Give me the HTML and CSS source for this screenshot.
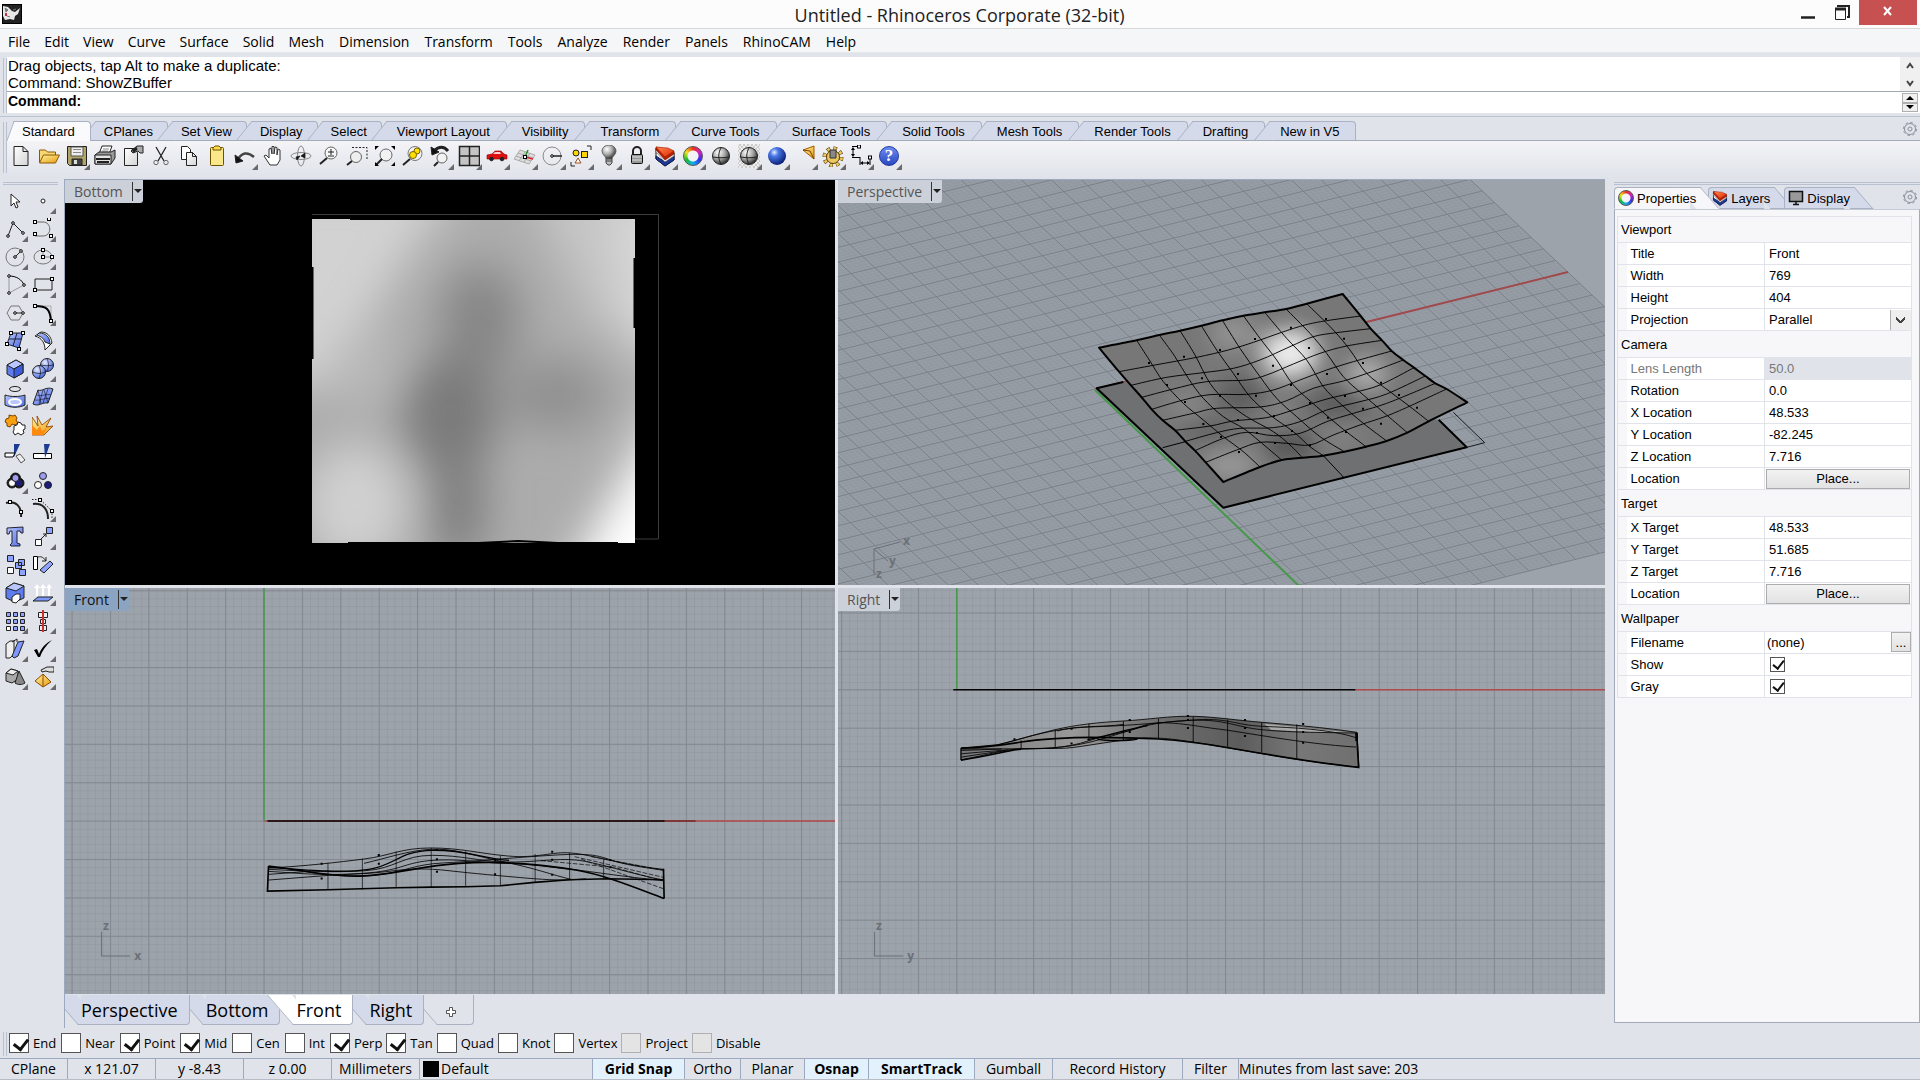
FILE: index.html
```
<!DOCTYPE html>
<html lang="en">
  <head>
    <meta charset="utf-8">
    <title>Untitled - Rhinoceros Corporate (32-bit)</title>
    <link rel="stylesheet" href="styles.css">
  </head>
  <body>
    <!-- Shared gradients and point markers -->
    <svg class="defs" aria-hidden="true">
      <defs>
        <linearGradient id="paper" x1="0" y1="0" x2="1" y2="1"><stop offset="0" stop-color="#fff"/><stop offset="1" stop-color="#d4d4d4"/></linearGradient>
        <linearGradient id="gold" x1="0" y1="0" x2="1" y2="1"><stop offset="0" stop-color="#fff3a0"/><stop offset="1" stop-color="#e89a10"/></linearGradient>
        <linearGradient id="blue" x1="0" y1="0" x2="1" y2="1"><stop offset="0" stop-color="#b9c6ff"/><stop offset="1" stop-color="#4a6ae0"/></linearGradient>
        <linearGradient id="red" x1="0" y1="0" x2="1" y2="1"><stop offset="0" stop-color="#ff8a50"/><stop offset="1" stop-color="#e02808"/></linearGradient>
        <radialGradient id="silverBall" cx=".35" cy=".3" r=".75"><stop offset="0" stop-color="#fff"/><stop offset=".5" stop-color="#aaa"/><stop offset="1" stop-color="#222"/></radialGradient>
        <radialGradient id="blueBall" cx=".35" cy=".3" r=".75"><stop offset="0" stop-color="#e8f0ff"/><stop offset=".3" stop-color="#4a78e8"/><stop offset="1" stop-color="#05186e"/></radialGradient>
        <radialGradient id="softBall" cx=".35" cy=".3" r=".75"><stop offset="0" stop-color="#e4eaff"/><stop offset="1" stop-color="#4464dc"/></radialGradient>
        <marker id="sq" markerUnits="userSpaceOnUse" markerWidth="5" markerHeight="5" refX="2.5" refY="2.5"><rect x="1" y="1" width="3" height="3" fill="#fff" stroke="#000"/></marker>
        <marker id="dot" markerUnits="userSpaceOnUse" markerWidth="5" markerHeight="5" refX="2.5" refY="2.5"><circle cx="2.5" cy="2.5" r="1.3" fill="#fff" stroke="#000"/></marker>
        <symbol id="layers" viewBox="0 0 22 22">
          <path d="M2 3v11l9 7 9-6V8z" fill="#fff" stroke="#111"/>
          <path d="M2 11v3l9 7 9-6v-4l-9 6z" fill="#1c3a9c" stroke="#101c50"/>
          <path d="M2 3v4l9 10 9-6V7l-9 5z" fill="#f4f4f4" stroke="#555" stroke-width=".6"/>
          <path d="M2 2v3l9 10 9-6V6z" fill="#b82000" stroke="#701000" stroke-width=".6"/>
          <path d="M2 2l9 10 9-6-6-3z" fill="url(#red)" stroke="#a02000" stroke-width=".6"/>
        </symbol>
        <symbol id="gear" viewBox="0 0 16 16">
          <circle cx="8" cy="8" r="5.5" fill="none" stroke="#8b909a"/>
          <circle cx="8" cy="8" r="6.6" fill="none" stroke="#8b909a" stroke-dasharray="2.6 2.6"/>
          <circle cx="8" cy="8" r="2" fill="none" stroke="#8b909a"/>
        </symbol>
      </defs>
    </svg>

    <header class="titlebar">
      <svg class="app-icon" viewBox="0 0 20 20">
        <rect x=".5" y=".5" width="19" height="19" fill="#222" stroke="#000"/>
        <path d="M1 2l5 1 4 4 3 1 5-4-2 6-3 2-1 4-4-1-5 1-2-4z" fill="#e8e8e8"/>
        <path d="M3 4l3 2-2 2zM11 6l3-1M5 12l3 1" fill="#777" stroke="#777"/>
        <path d="M3 9h2v3H3z" fill="#c03038"/>
      </svg>
      <h1 class="window-title">Untitled - Rhinoceros Corporate (32-bit)</h1>
      <div class="window-buttons">
        <button class="win-btn" aria-label="Minimize"><svg viewBox="0 0 16 20"><path d="M1 16.500h14" stroke="#222" stroke-width="2.500"/></svg></button>
        <button class="win-btn" aria-label="Restore"><svg viewBox="0 0 16 20"><path d="M4 4V5h11v11h-2" fill="none" stroke="#222" stroke-width="2"/><path d="M1.500 8v10.500h10V8" fill="none" stroke="#222"/><path d="M1 8h11" stroke="#222" stroke-width="3"/></svg></button>
        <button class="win-btn close" aria-label="Close"><svg viewBox="0 0 12 12"><path d="M2 2l7 8M9 2l-7 8" stroke="#fff" stroke-width="2"/></svg></button>
      </div>
    </header>

    <nav class="menubar">
      <button>File</button><button>Edit</button><button>View</button><button>Curve</button><button>Surface</button><button>Solid</button><button>Mesh</button><button>Dimension</button><button>Transform</button><button>Tools</button><button>Analyze</button><button>Render</button><button>Panels</button><button>RhinoCAM</button><button>Help</button>
    </nav>

    <section class="command">
      <div class="grip"></div>
      <div class="command-box">
        <div class="history">
          <div class="history-text">
            <p>Drag objects, tap Alt to make a duplicate:</p>
            <p>Command: ShowZBuffer</p>
          </div>
          <div class="scroller">
            <button aria-label="Scroll up"><svg viewBox="0 0 8 8"><path d="M1 6l3-4 3 4" fill="none" stroke="#444" stroke-width="2"/></svg></button>
            <button aria-label="Scroll down"><svg viewBox="0 0 8 8"><path d="M1 2l3 4 3-4" fill="none" stroke="#444" stroke-width="2"/></svg></button>
          </div>
        </div>
        <div class="prompt">
          <label for="cmd">Command:</label>
          <input type="text" id="cmd">
          <div class="spinner">
            <button aria-label="Previous command"><svg viewBox="0 0 8 6"><path d="M0 5l4-4 4 4z"/></svg></button>
            <button aria-label="Next command"><svg viewBox="0 0 8 6"><path d="M0 1l4 4 4-4z"/></svg></button>
          </div>
        </div>
      </div>
    </section>

    <section class="toolbars">
      <div class="grip"></div>
      <div class="toolbars-body">
        <div class="tabs">
          <button class="tab active">Standard</button><button class="tab">CPlanes</button><button class="tab">Set View</button><button class="tab">Display</button><button class="tab">Select</button><button class="tab">Viewport Layout</button><button class="tab">Visibility</button><button class="tab">Transform</button><button class="tab">Curve Tools</button><button class="tab">Surface Tools</button><button class="tab">Solid Tools</button><button class="tab">Mesh Tools</button><button class="tab">Render Tools</button><button class="tab">Drafting</button><button class="tab">New in V5</button>
          <button class="options" aria-label="Toolbar options"><svg><use href="#gear"/></svg></button>
        </div>
        <div class="toolbar">
          <button class="tool" title="New"><svg viewBox="0 0 22 22"><path d="M4 1.500h9l5 5v14H4z" fill="url(#paper)"/><path d="M13 1.500v5h5"/></svg></button>
          <button class="tool" title="Open"><svg viewBox="0 0 22 22"><path d="M1.500 17V5h6l2 2h8v4" fill="#f7d774" stroke="#8a5a00"/><path d="M1.500 18l4-8h16l-4 8z" fill="url(#gold)" stroke="#8a5a00"/></svg></button>
          <button class="tool more" title="Save"><svg viewBox="0 0 22 22"><path d="M1.500 1.500h19v19h-17l-2-2z" fill="#b0a468"/><path d="M5 2h12v9H5z" fill="#eee" stroke="#555"/><path d="M7 4.500h8M7 7.500h8" stroke="#888"/><path d="M6 14h10v6H6z" fill="#444"/><path d="M8 15h3v4H8z" fill="#ddd" stroke="none"/></svg></button>
          <button class="tool" title="Print"><svg viewBox="0 0 22 22"><path d="M5 9l3-8h10l-3 8z" fill="#fff"/><path d="M9 4h6M8 6h6" stroke="#888"/><path d="M1 10l4-3h12l4-2v8l-4 6H1z" fill="#999"/><path d="M1 10h16v9H1z" fill="#e2e2e2"/><path d="M2 14h14M3 17h12" stroke="#222" stroke-width="2"/></svg></button>
          <button class="tool" title="Document properties"><svg viewBox="0 0 22 22"><path d="M2.500 3.500h9l4 4v13h-13z" fill="url(#paper)"/><path d="M9 6l6-5h6v7h-3l-2-2-5 2z" fill="#aaa"/><path d="M10 5l5-2M11 7l4-3" stroke-width="2"/></svg></button>
          <button class="tool" title="Cut"><svg viewBox="0 0 22 22"><path d="M6 2l8 14M16 2L8 16" stroke-width="1.300"/><circle cx="6" cy="17.500" r="2.200" stroke="#666"/><circle cx="16" cy="17.500" r="2.200" stroke="#666"/></svg></button>
          <button class="tool" title="Copy"><svg viewBox="0 0 22 22"><path d="M3.500 1.500h6l3 3v10h-9z" fill="#fff"/><path d="M8.500 7.500h6l4 4v9h-10z" fill="url(#paper)"/><path d="M14.500 7.500v4h4"/></svg></button>
          <button class="tool" title="Paste"><svg viewBox="0 0 22 22"><rect x="4.500" y="2.500" width="13" height="18" rx="1" fill="#fbe88a" stroke="#6a5400"/><path d="M7 5V3l2-2h4l2 2v2z" fill="#ffd94a" stroke="#6a5400"/></svg></button>
          <button class="tool more" title="Undo"><svg viewBox="0 0 22 22"><path d="M4 14C8 8 13 6 20 12" stroke="#444" stroke-width="2.500"/><path d="M1 10l1 8 7-2z" fill="#111"/></svg></button>
          <button class="tool" title="Pan"><svg viewBox="0 0 22 22"><path d="M8 20l-6-9 2-1 3 3V4l2-1 1 6V1.500h2V9l1-7 2 .5V10l1-6 2 1v10l-3 5z" fill="#fff" stroke="#333"/></svg></button>
          <button class="tool" title="Rotate view"><svg viewBox="0 0 22 22"><ellipse cx="11" cy="11" rx="10" ry="3.500" stroke="#888"/><ellipse cx="11" cy="11" rx="3.500" ry="10" stroke="#888"/><path d="M6 12l4-1-3 4zM11 11l4-3v5z" fill="#111" stroke-width=".8"/></svg></button>
          <button class="tool" title="Zoom dynamic"><svg viewBox="0 0 22 22"><circle cx="13" cy="8" r="6" fill="#f6f6f6" stroke="#666"/><path d="M9 13l-7 6" stroke-width="2"/><path d="M10 7h6M13 4v6M10 11h6"/></svg></button>
          <button class="tool" title="Zoom window"><svg viewBox="0 0 22 22"><path d="M6 2.500h15v12" stroke-dasharray="2 1.500"/><circle cx="10" cy="12" r="5.500" fill="#eee" stroke="#666"/><path d="M6 16l-5 4" stroke-width="2"/></svg></button>
          <button class="tool" title="Zoom extents"><svg viewBox="0 0 22 22"><circle cx="12" cy="10" r="6" fill="#f2f2f2" stroke="#666"/><path d="M8 14l-6 6" stroke-width="2"/><path d="M1 5V1h4zM17 1h4v4zM21 17v4h-4zM1 17v4h4z" fill="#000" stroke="none"/></svg></button>
          <button class="tool" title="Zoom selected"><svg viewBox="0 0 22 22"><circle cx="13" cy="8.500" r="7" fill="#f2f2f2" stroke="#777"/><circle cx="15" cy="6" r="3" fill="#ffe000" stroke="#776000"/><circle cx="11" cy="10" r="3.500" fill="#ffe000" stroke="#776000"/><path d="M8 14l-7 6" stroke-width="2"/></svg></button>
          <button class="tool more" title="Undo view"><svg viewBox="0 0 22 22"><path d="M4 6c5-5 10-5 14 0" stroke="#222" stroke-width="3"/><path d="M1 2l1 8 7-3z" fill="#111"/><circle cx="12" cy="13" r="5" fill="#f2f2f2" stroke="#666"/><path d="M8 17l-4 4" stroke-width="2"/></svg></button>
          <button class="tool more" title="Viewports"><svg viewBox="0 0 22 22"><path d="M1.500 1.500h20v19h-20z" fill="#c4c4c4" stroke-width="1.500"/><path d="M11.500 2v18M2 11h19" stroke-width="1.500"/></svg></button>
          <button class="tool more" title="Set view"><svg viewBox="0 0 22 22"><path d="M1 10l5-1 3-3h6l3 3 3 1v4H1z" fill="#e01010" stroke="#900000" stroke-width=".6"/><path d="M9 7l-2 2h8l-1-2z" fill="#ffd0d0" stroke="none"/><circle cx="5.500" cy="14" r="1.800" fill="#222"/><circle cx="16" cy="14" r="1.800" fill="#222"/></svg></button>
          <button class="tool more" title="CPlane"><svg viewBox="0 0 22 22"><path d="M6 5l15 5-6 9-15-5zM4 8l15 5M2 11l15 5M11 7l-6 9M16 8l-6 9" stroke="#aaa" fill="#ddd"/><path d="M11 12l8 2" stroke="#e02020" stroke-width="1.500"/><path d="M11 12l3-7" stroke="#209020" stroke-width="1.500"/><rect x="9.500" y="10.500" width="3" height="3" fill="#fff" stroke="#000"/></svg></button>
          <button class="tool more" title="Object snap"><svg viewBox="0 0 22 22"><circle cx="10" cy="11" r="9" stroke="#888"/><path d="M10 11h10" stroke-width="1.500" marker-start="url(#dot)"/></svg></button>
          <button class="tool more" title="Select objects"><svg viewBox="0 0 22 22"><circle cx="6" cy="8" r="3" fill="#ffd400"/><rect x="11.500" y="6.500" width="6" height="6" fill="#ffd400"/><path d="M5 18l3-5 3 5z" fill="#fff" stroke="#a05020"/><path d="M17 1h4v4M1 17v4h4"/></svg></button>
          <button class="tool more" title="Hide"><svg viewBox="0 0 22 22"><path d="M8 14c0-3-4-4-4-8a7 6 0 0 1 14 0c0 4-4 5-4 8z" fill="url(#silverBall)" stroke="#666"/><path d="M8 14h6v4l-2 2h-2l-2-2zM8 16h6" fill="#bbb" stroke="#444"/></svg></button>
          <button class="tool more" title="Lock"><svg viewBox="0 0 22 22"><path d="M7 10V6a4 4 0 0 1 8 0v4" stroke-width="2"/><rect x="5.500" y="9.500" width="11" height="9" rx="1" fill="#999" stroke="#111"/><path d="M6 12h10M6 15h10" stroke="#ddd"/></svg></button>
          <button class="tool more" title="Layers"><svg><use href="#layers"/></svg></button>
          <button class="tool more" title="Properties"><span class="wheel"></span></button>
          <button class="tool" title="Shade"><svg viewBox="0 0 22 22"><circle cx="11" cy="11" r="8.500" fill="url(#silverBall)"/><path d="M3 12c5 1 11 1 16 0M11 3c-3 5-3 11 0 16" stroke="#222"/></svg></button>
          <button class="tool more checker" title="Render preview"><svg viewBox="0 0 22 22"><circle cx="11" cy="11" r="8.500" fill="url(#silverBall)"/><path d="M3 12c5 1 11 1 16 0M11 3c-3 5-3 11 0 16" stroke="#222"/></svg></button>
          <button class="tool more" title="Render"><svg viewBox="0 0 22 22"><circle cx="11" cy="11" r="9" fill="url(#blueBall)" stroke="none"/></svg></button>
          <button class="tool more" title="Spotlight"><svg viewBox="0 0 22 22"><path d="M9 5l11-4v13z" fill="url(#gold)" stroke="#a05a00"/><path d="M9 5l7 1 4 8" stroke="#7a4000"/></svg></button>
          <button class="tool more" title="Options"><svg viewBox="0 0 22 22"><circle cx="11" cy="12" r="8.500" stroke="#5a3c00" stroke-width="4" stroke-dasharray="3.500 3.200"/><circle cx="11" cy="12" r="8.500" stroke="#ecc860" stroke-width="3" stroke-dasharray="2.500 4.200" stroke-dashoffset="-.5"/><circle cx="11" cy="12" r="6.500" fill="#ecc860" stroke="#5a3c00"/><path d="M8 5h6v8H8z" fill="#888" stroke="#333"/></svg></button>
          <button class="tool more" title="Dimension"><svg viewBox="0 0 22 22"><path d="M2 1.500h8M3 4v6M2 12.500h8M10 12v8M20 12v8M12 18h7" stroke="#000"/><path d="M3 2l-2 3h4zM3 12l-2-3h4zM10 18l3-2v4zM20 18l-3-2v4z" fill="#000" stroke="none"/><path d="M9 1.500M9 12.500h0M20 12.500h0" marker-start="url(#sq)" marker-end="url(#sq)"/></svg></button>
          <button class="tool more" title="Help"><span class="help">?</span></button>
        </div>
      </div>
    </section>

    <main class="workspace">
      <aside class="sidebar">
        <div class="grip-h"></div>
        <div class="tools">
          <button class="tool" title="Select"><svg viewBox="0 0 22 22"><path d="M7 4v12l3-3 2 5 2-1-2-5h4z" fill="#fff"/></svg></button>
          <button class="tool more" title="Point"><svg viewBox="0 0 22 22"><circle cx="11" cy="11" r="2" fill="#fff"/></svg></button>
          <button class="tool more" title="Polyline"><svg viewBox="0 0 22 22"><path class="dots" d="M4 18L9 5l10 10"/></svg></button>
          <button class="tool more" title="Curve"><svg viewBox="0 0 22 22"><path d="M3 4h8c9 0 9 14 0 14H3" stroke="#666"/><path class="nodes" d="M3 4L17 1 19 18 3 16"/></svg></button>
          <button class="tool more" title="Circle"><svg viewBox="0 0 22 22"><circle cx="11" cy="11" r="9" stroke="#777"/><path class="dots" d="M11 11l6-6"/></svg></button>
          <button class="tool more" title="Ellipse"><svg viewBox="0 0 22 22"><ellipse cx="11" cy="11" rx="9" ry="7" stroke="#777"/><path d="M11 4v7h9" stroke="#888"/><path class="nodes" d="M11 4L11 11 20 11"/></svg></button>
          <button class="tool more" title="Arc"><svg viewBox="0 0 22 22"><path d="M5 2v17l15-8" stroke="#999"/><path d="M5 2c8 0 13 4 15 9" stroke="#000"/><path class="nodes round" d="M5 2L20 11 5 19"/></svg></button>
          <button class="tool more" title="Rectangle"><svg viewBox="0 0 22 22"><path d="M3 5h17v11H3z"/><path class="nodes" d="M20 5L3 16"/></svg></button>
          <button class="tool more" title="Polygon"><svg viewBox="0 0 22 22"><path d="M3 11l4-7h8l4 7-4 7H7z" stroke="#777"/><path class="dots" d="M11 11h8"/></svg></button>
          <button class="tool more" title="Fillet"><svg viewBox="0 0 22 22"><path d="M3 4h16v15" stroke="#aaa"/><path d="M3 4c12 0 15 3 16 15" stroke="#000" stroke-width="2"/><path class="nodes" d="M3 4L19 19"/></svg></button>
          <button class="tool more" title="Surface"><svg viewBox="0 0 22 22"><path d="M7 3h12l-4 15-12-4z" fill="url(#blue)" stroke="#223"/><path d="M13 3L9 16M5 9h13" stroke="#223"/><path class="nodes" d="M7 3L19 3 15 19 3 14"/></svg></button>
          <button class="tool more" title="Sweep"><svg viewBox="0 0 22 22"><path d="M3 6l6-4c6 0 10 4 11 11l-7 7c0-7-3-12-10-14z" fill="#fff"/><path d="M7 3c7 0 11 4 11 11l-5-2c-1-3-3-5-8-7z" fill="url(#blue)"/></svg></button>
          <button class="tool more" title="Box"><svg viewBox="0 0 22 22"><path d="M3 7l9-5 7 4v9l-9 5-7-4z" fill="#5c7cf0"/><path d="M3 7l9-5 7 4-9 5z" fill="#b9c6ff"/><path d="M10 11v9l9-5V6z" fill="#3c5cd8"/></svg></button>
          <button class="tool more" title="Boolean"><svg viewBox="0 0 22 22"><circle cx="15" cy="7" r="6.500" fill="url(#softBall)"/><circle cx="7" cy="14" r="6.500" fill="url(#softBall)"/><path d="M1 14c4 2 8 2 12 0M7 8c2 4 2 8 0 12M9 7c4 1 8 1 12 0M15 1c2 4 2 8 0 12" stroke="#112" stroke-width=".7"/></svg></button>
          <button class="tool more" title="Project"><svg viewBox="0 0 22 22"><ellipse cx="11" cy="3" rx="5.500" ry="2.500"/><path d="M1 9c6 2 14 2 20 0v10c-6 3-14 3-20 0z" fill="url(#blue)"/><ellipse cx="11" cy="16" rx="6" ry="3" fill="#b9c6ff" stroke="#fff" stroke-width="2"/></svg></button>
          <button class="tool more" title="Mesh"><svg viewBox="0 0 22 22"><path d="M6 4c4 2 8-4 15-1l-5 14c-6-1-9 4-15 1z" fill="url(#blue)"/><path d="M11 4L7 18M16 3l-5 14M5 9c6 2 9-2 14 0M3 14c6 1 10-3 15-1M6 4l3 14M12 4l4 13" stroke="#112" stroke-width=".6"/></svg></button>
          <button class="tool" title="Join"><svg viewBox="0 0 22 22"><path d="M2 5l3-1 0-3 4 1 2-1 2 3-1 2 2 3-3 2-3-1-2 3-3-1 0-3-2-1z" fill="#f9a010" stroke="#7a4400"/><path d="M10 12l3-1 1-3 3 1 1 2 3 0 0 4-2 1 1 3-3 2-3-2-3 2-2-3 1-2z" fill="#fff"/></svg></button>
          <button class="tool" title="Explode"><svg viewBox="0 0 22 22"><path d="M0 3l6 9L5 2l5 9 9-7-5 9 7-1-9 9H0z" fill="url(#gold)" stroke="#8a3a00" stroke-width=".8"/><path d="M0 21V11l5 5 3-4 2 5 5-3-4 7z" fill="#ff8a10" stroke="none"/></svg></button>
          <button class="tool" title="Trim"><svg viewBox="0 0 22 22"><path d="M10 2h6l-6 13z" fill="#1c3c94" stroke="none"/><path d="M1 11h10l-2 4H1z" fill="#fff" stroke="#000"/><path d="M12 14l4-2 5 6-4 3z" fill="#eee" stroke="#555"/></svg></button>
          <button class="tool" title="Split"><svg viewBox="0 0 22 22"><path d="M1.500 11.500h18v5h-18z" fill="#fff" stroke="#000"/><path d="M12 2h6l-5 14z" fill="#1c3c94" stroke="none"/></svg></button>
          <button class="tool more" title="Group"><svg viewBox="0 0 22 22"><circle cx="11.500" cy="8" r="5" fill="#000"/><circle cx="8" cy="13" r="5" fill="#000"/><circle cx="15" cy="13" r="5" fill="#000"/><circle cx="8" cy="13" r="3.500" fill="#fff"/><circle cx="15" cy="13" r="3.500" fill="#1c1c80"/><circle cx="11.500" cy="8" r="3.500" fill="#9c9cf0"/></svg></button>
          <button class="tool" title="Ungroup"><svg viewBox="0 0 22 22"><circle cx="11" cy="6" r="3.500" fill="#9c9cf0"/><circle cx="6" cy="15" r="3.500" fill="#fff"/><circle cx="16" cy="15" r="3.500" fill="#1c1c80"/></svg></button>
          <button class="tool" title="Edit points"><svg viewBox="0 0 22 22"><path d="M2 5c10-3 16 4 15 14" stroke-width="2"/><path class="nodes" d="M6 4L17 14"/></svg></button>
          <button class="tool more" title="Control points"><svg viewBox="0 0 22 22"><path d="M0 1.500h8L20 13v8" stroke-dasharray="1.500 1.500"/><path d="M1 6c9-1 15 4 15 15" stroke-width="2"/><path class="nodes" d="M8 2L20 13"/></svg></button>
          <button class="tool" title="Text"><svg viewBox="0 0 22 22"><path d="M3 2l16-1v6h-2l-1-2h-3v12l3 1v2H7l-1-1 2-2V5H6L5 8H3z" fill="url(#blue)" stroke="#223"/></svg></button>
          <button class="tool more" title="Move"><svg viewBox="0 0 22 22"><path d="M3.500 13.500h6v6h-6z" fill="#fff"/><path d="M14.500 1.500h6v6h-6z" fill="#8ca4ff"/><path d="M9 13l5-5M11 8h3v3"/></svg></button>
          <button class="tool" title="Copy objects"><svg viewBox="0 0 22 22"><path d="M3.500 1.500h6v6h-6zM14.500 5.500h6v6h-6zM11.500 8.500h6v6h-6zM15.500 15.500h6v6h-6z" fill="#8ca4ff"/><path d="M3.500 13.500h6v6h-6z" fill="#fff"/></svg></button>
          <button class="tool" title="Rotate"><svg viewBox="0 0 22 22"><path d="M1.500 2.500h4v13h-4z" fill="#fff" stroke="#000"/><path d="M8 16l10-9 3 3-9 9z" fill="#8ca4ff"/><path d="M6 3c4-1 6 1 8 4M14 3v4h-4"/></svg></button>
          <button class="tool more" title="Solid tools"><svg viewBox="0 0 22 22"><path d="M2 6l8-5 10 3v12l-9 4-9-4z" fill="#5c7cf0"/><path d="M2 6l8-5 10 3-8 5z" fill="#b9c6ff"/><path d="M8 20v-5l4-3h4v5l-4 4z" fill="#fff"/></svg></button>
          <button class="tool more" title="Extrude"><svg viewBox="0 0 22 22"><path d="M1 19l5-4h15l-5 4z" fill="#7c98ff"/><path d="M5 14V5M11 14V5M17 14V5" stroke="#fff" stroke-width="2"/><path d="M2 6l3-4 3 4zM8 6l3-4 3 4zM14 6l3-4 3 4z" fill="#fff" stroke="none"/></svg></button>
          <button class="tool more" title="Array"><svg viewBox="0 0 22 22"><path d="M2.500 2.500h4v4h-4zM9.500 2.500h4v4h-4zM16.500 2.500h4v4h-4zM2.500 9.500h4v4h-4zM9.500 9.500h4v4h-4zM16.500 9.500h4v4h-4zM9.500 16.500h4v4h-4zM16.500 16.500h4v4h-4z" fill="#8ca4ff"/><path d="M2.500 16.500h4v4h-4z" fill="#fff"/></svg></button>
          <button class="tool more" title="Align"><svg viewBox="0 0 22 22"><path d="M6.500 2.500h9v5h-9zM8.500 9.500h5v4h-5zM7.500 15.500h7v5h-7z" fill="#eee"/><path d="M11 0v22" stroke="#d03030" stroke-width="2"/></svg></button>
          <button class="tool more" title="Mirror"><svg viewBox="0 0 22 22"><path d="M2 6l4-3h4v13l-4 4H2z" fill="#eee"/><path d="M8 18l6-14 6-1-6 15-4 2z" fill="#7c98ff"/><path d="M8 4l5-3v3"/></svg></button>
          <button class="tool more" title="Check"><svg viewBox="0 0 22 22"><path d="M2 12l3-1 2 5C10 9 14 5 20 2 14 7 10 13 8 19H6z" fill="#000" stroke="none"/></svg></button>
          <button class="tool more" title="Mesh tools"><svg viewBox="0 0 22 22"><path d="M2 7l5-4 7 2v8l-6 4-6-2z" fill="#aaa"/><path d="M2 7l5-4 7 2-5 4z" fill="#eee"/><path d="M15 5l6 12c-3 2-7 2-10 0z" fill="#888"/></svg></button>
          <button class="tool more" title="Render tools"><svg viewBox="0 0 22 22"><path d="M3 15l8-7 8 8-8 5z" fill="url(#gold)" stroke="#8a4a00"/><path d="M11 8v13" stroke="#8a4a00"/><path d="M9 4l6-3h7v5h-5l-3-1-4 1z" fill="#ddd"/></svg></button>
        </div>
      </aside>

      <div class="center">
        <div class="viewports">
          <section class="viewport dark">
            <svg viewBox="0 0 770 405" preserveAspectRatio="xMinYMin slice">
              <defs>
                <filter id="depth" x="-20%" y="-20%" width="140%" height="140%"><feGaussianBlur stdDeviation="22"/></filter>
                <clipPath id="depthClip"><path d="M247 39h323v324H247z"/></clipPath>
              </defs>
              <path d="M247 34.500h346.500V359H570" fill="none" stroke="#3c3c3c"/>
              <g clip-path="url(#depthClip)">
                <path d="M247 39h323v324H247z" fill="#acacac"/>
                <g filter="url(#depth)">
                  <path d="M200 0h200l-50 65-50 80-30 60h-70z" fill="#d2d2d2"/>
                  <path d="M460 0h160v160l-90-10z" fill="#c6c6c6"/>
                  <path d="M550 20h60v160h-40z" fill="#dadada"/>
                  <ellipse cx="290" cy="325" rx="52" ry="62" fill="#d0d0d0"/>
                  <ellipse cx="300" cy="190" rx="36" ry="40" fill="#b8b8b8"/>
                  <ellipse cx="415" cy="140" rx="40" ry="56" fill="#868686"/>
                  <ellipse cx="385" cy="235" rx="48" ry="60" fill="#7a7a7a"/>
                  <ellipse cx="393" cy="325" rx="28" ry="60" fill="#7e7e7e"/>
                  <ellipse cx="490" cy="215" rx="50" ry="36" fill="#909090"/>
                  <path d="M620 190v230H490z" fill="#fff"/>
                </g>
              </g>
              <path d="M285 39h250M247.500 87v92M569.500 78v70M283 363h130l40-2 40 2h60" stroke="#000" stroke-width="2" fill="none"/>
            </svg>
            <button class="view-label">Bottom<i></i></button>
          </section>

          <section class="viewport">
            <svg viewBox="0 0 767 405" preserveAspectRatio="xMinYMin slice">
              <defs>
                <filter id="soft" x="-60%" y="-60%" width="220%" height="220%"><feGaussianBlur stdDeviation="32"/></filter>
                <clipPath id="terrainClip"><path id="terrainShape"/></clipPath>
              </defs>
              <path id="gridPlane" fill="#969da5"/>
              <path id="gridMinor" stroke="#868c94" stroke-width=".2" fill="none"/>
              <path id="gridMajor" stroke="#7d828a" fill="none"/>
              <path d="M258 209L730 92" stroke="#a04a4c" stroke-width="2"/>
              <path d="M257 210L461 406" stroke="#46984a" stroke-width="2"/>
              <!-- Model coordinates are three to the pixel -->
              <g transform="translate(222 90) scale(.33333)" fill="none" stroke="#000" stroke-linejoin="round">
                <path d="M1180 427l94 91-54 14" stroke-width="2.500"/>
                <path d="M110 355L190 336 1136 449l84 83L490 713z" fill="#6f7072" stroke="none"/>
                <path d="M190 336l-80 19 380 358 730-181-84-83" stroke-width="6"/>
                <path d="M308 533l72-19M790 557l62 66" stroke-width="3"/>
                <g clip-path="url(#terrainClip)" stroke="none">
                  <path d="M100 60h1140v600H100z" fill="#777"/>
                  <g filter="url(#soft)">
                    <ellipse cx="520" cy="190" rx="70" ry="50" fill="#949494"/>
                    <ellipse cx="690" cy="250" rx="85" ry="70" fill="#ececec"/>
                    <ellipse cx="920" cy="310" rx="60" ry="45" fill="#b4b4b4"/>
                    <ellipse cx="380" cy="405" rx="60" ry="30" fill="#8c8c8c"/>
                    <ellipse cx="540" cy="375" rx="70" ry="44" fill="#585858"/>
                    <ellipse cx="660" cy="430" rx="40" ry="40" fill="#868686"/>
                    <ellipse cx="830" cy="400" rx="90" ry="34" fill="#545454"/>
                    <ellipse cx="450" cy="480" rx="90" ry="24" fill="#5c5c5c"/>
                    <ellipse cx="690" cy="525" rx="80" ry="32" fill="#484848"/>
                    <ellipse cx="840" cy="500" rx="60" ry="26" fill="#868686"/>
                    <ellipse cx="510" cy="585" rx="80" ry="40" fill="#9c9c9c"/>
                  </g>
                </g>
                <path id="terrainWires" stroke-width="2.800"/>
                <path id="terrainEdge" stroke-width="6"/>
                <path id="terrainPoints" stroke-width="6"/>
              </g>
              <g class="axes"><path d="M62 362l-26 7 14 12M36 369v26"/><text x="65" y="365">x</text><text x="51" y="385">y</text><text x="38" y="398">z</text></g>
            </svg>
            <button class="view-label">Perspective<i></i></button>
          </section>

          <section class="viewport">
            <svg viewBox="0 0 770 405" preserveAspectRatio="xMinYMin slice">
              <defs>
                <pattern id="frontMinor" patternUnits="userSpaceOnUse" x="198.500" y="232.500" width="7.66" height="7.66"><path d="M0 0H8M0 0V8" stroke="#8a9098" stroke-width=".8" fill="none"/></pattern>
                <pattern id="frontMajor" patternUnits="userSpaceOnUse" x="198" y="232" width="38.3" height="38.3"><path d="M0 .5H39M.5 0V39" stroke="#848991" fill="none"/></pattern>
              </defs>
              <path d="M0 0h770v405H0z" fill="url(#frontMinor)"/>
              <path d="M0 0h770v405H0z" fill="url(#frontMajor)"/>
              <path d="M198.500 0v233" stroke="#46984a" stroke-width="1.500"/>
              <path d="M199 232.500h571" stroke="#b04a4c" stroke-width="1.500"/>
              <path d="M597 232.500h32" stroke="#702c2e" stroke-width="1.500"/>
              <path d="M202 232.500h396" stroke="#000" stroke-width="1.500"/>
              <g transform="translate(175 212) scale(.33333)" fill="none" stroke="#000" stroke-width="2.500">
                <path d="M84 196L81 271 262 267 466 261 571 259 675 258 778 255 880 245 985 237 1100 234 1268 237M1266 204l2 89" stroke-width="5"/>
                <path d="M84 196c90 10 170 32 270 30s180-30 300-38 230 0 350 20c90 16 170 50 264 85" stroke-width="5"/>
                <path d="M84 200c110 8 220 18 300 6s90-55 190-57 150 25 230 30" stroke-width="4"/>
                <path d="M84 202C200 196 290 185 370 175S480 142 570 142s140 16 230 24 130-14 190-9 150 35 275 49"/>
                <path d="M84 206c120 6 200 10 290 4s110-46 200-46 140 18 220 20 150-12 210-6 160 40 262 60"/>
                <path d="M84 212c100 6 160 14 280 6s120-30 200-38 150 6 230 8 120 10 180 16 170 24 294 36"/>
                <path d="M84 221l110-8c80 12 160 18 230 8s100-30 180-34 190-14 280-20 160-12 210 6 90 24 174 36"/>
                <path d="M84 238l180-14c60-4 120-4 180-12s110-10 180-2 160 16 230 22 120 8 180 2"/>
                <path d="M370 188c70-16 130-38 200-42s130 20 220 38 140 38 200 52" />
                <path d="M262 186v82M365 174v92M466 152v110M571 142v118M674 152v107M778 165v91M882 160v86M985 156v82M1087 174v60" stroke-width="2"/>
                <path d="M1000 168l266 62M1020 176l246 88M1050 168l214 40M900 180l220 20 140 40" stroke-width="2" stroke-dasharray="14 5"/>
                <path class="pts" d="M243 189h.1M243 233h.1M414 163h.1M414 189h.1M588 148h.1M588 176h.1M588 213h.1M762 178h.1M762 221h.1M933 153h.1M933 177h.1M933 222h.1M1107 178h.1M1107 200h.1"/>
              </g>
              <g class="axes"><path d="M36.500 343v24H65"/><text x="38" y="341">z</text><text x="69" y="371">x</text></g>
            </svg>
            <button class="view-label current">Front<i></i></button>
          </section>

          <section class="viewport">
            <svg viewBox="0 0 767 405" preserveAspectRatio="xMinYMin slice">
              <defs>
                <pattern id="rightMinor" patternUnits="userSpaceOnUse" x="118.500" y="101.500" width="7.66" height="7.66"><path d="M0 0H8M0 0V8" stroke="#8a9098" stroke-width=".8" fill="none"/></pattern>
                <pattern id="rightMajor" patternUnits="userSpaceOnUse" x="118" y="101" width="38.3" height="38.3"><path d="M0 .5H39M.5 0V39" stroke="#848991" fill="none"/></pattern>
                <linearGradient id="sideShade"><stop offset="0" stop-color="#777"/><stop offset=".28" stop-color="#999"/><stop offset=".5" stop-color="#6e6e6e"/><stop offset=".7" stop-color="#5c5c5c"/><stop offset=".85" stop-color="#777"/><stop offset="1" stop-color="#707070"/></linearGradient>
              </defs>
              <path d="M0 0h767v405H0z" fill="url(#rightMinor)"/>
              <path d="M0 0h767v405H0z" fill="url(#rightMajor)"/>
              <path d="M118.500 0v101" stroke="#46984a" stroke-width="1.500"/>
              <path d="M515 101.500h252" stroke="#b04a4c" stroke-width="1.500"/>
              <path d="M115 101.500h401" stroke="#000" stroke-width="1.500"/>
              <g transform="translate(92 82) scale(.33333)" fill="none" stroke="#000" stroke-width="2.500">
                <path d="M92 233l110-10C260 210 310 193 374 178s130-22 204-26 140-16 210-14 130 12 205 18 190 16 284 30l6 104c-130-12-230-30-400-59S700 203 640 203c-90 8-150 20-210 28s-130-2-200 8L92 269z" fill="url(#sideShade)"/>
                <path d="M1000 160l270 28-120-2-130-8z" fill="#aaa" stroke="none"/>
                <path d="M92 269C180 256 230 240 272 236M92 233c70-2 130-10 180-18s150-14 210-14 120 0 200 5 130 12 210 26 270 46 390 59l-6-104" stroke-width="5"/>
                <path d="M92 236c120-2 220 2 300-6s140-30 200-48 90-28 190-32 130 20 210 28 160 8 284 10M200 224c80-20 160-50 275-54s180-10 300-20 130 14 220 18 200 8 280 34M272 236c70 0 140-4 200-24s100-20 160-44 160 0 230 8 250 44 412 54M380 182c60-18 130-10 200-20"/>
                <path d="M94 240l120-4M94 250l140-12M94 260l130-20M92 233v36"/>
                <path d="M470 208c60-10 110-30 180-42M500 206c30 6 90 6 120 0" stroke-width="4"/>
                <path d="M272 210v26M374 178v54M475 160v52M578 152v58M683 145v60M787 139v76M890 148v82M992 156v90M1097 162v102" stroke-width="2.500"/>
                <path class="pts" d="M252 207h.1M423 175h.1M423 219h.1M597 149h.1M597 185h.1M771 137h.1M771 149h.1M771 173h.1M942 149h.1M942 173h.1M942 197h.1M1116 161h.1M1116 185h.1M1116 217h.1"/>
                <path d="M1276 188v24" stroke-width="8"/>
              </g>
              <g class="axes"><path d="M36.500 343v24H65"/><text x="38" y="341">z</text><text x="69" y="371">y</text></g>
            </svg>
            <button class="view-label">Right<i></i></button>
          </section>
        </div>
        <div class="view-tabs">
          <button>Perspective</button><button>Bottom</button><button class="active">Front</button><button>Right</button><button class="add" aria-label="New tab"><svg viewBox="0 0 10 10"><path d="M3.500.5h3v3h3v3h-3v3h-3v-3h-3v-3h3z" fill="#fff" stroke="#555"/></svg></button>
        </div>
      </div>

      <aside class="panel">
        <div class="grip-h"></div>
        <div class="panel-tabs">
          <button class="active"><span class="wheel small"></span>Properties</button>
          <button><svg><use href="#layers"/></svg>Layers</button>
          <button><svg viewBox="0 0 16 16"><rect x="1.500" y="1.500" width="13" height="10" fill="#999" stroke="#111" stroke-width="1.500"/><path d="M5 14.500h6M8 12v2" stroke="#111" stroke-width="1.500"/></svg>Display</button>
          <button class="options" aria-label="Panel options"><svg><use href="#gear"/></svg></button>
        </div>
        <div class="panel-body">
          <table class="props">
            <colgroup><col class="indent"><col class="names"><col></colgroup>
            <tr><th colspan="3" class="group first">Viewport</th></tr>
            <tr><td></td><th><label for="title">Title</label></th><td><input type="text" id="title" value="Front"></td></tr>
            <tr><td></td><th><label for="width">Width</label></th><td><input type="text" id="width" value="769"></td></tr>
            <tr><td></td><th><label for="height">Height</label></th><td><input type="text" id="height" value="404"></td></tr>
            <tr><td></td><th><label for="projection">Projection</label></th><td><select id="projection"><option>Parallel</option><option>Perspective</option></select></td></tr>
            <tr><th colspan="3" class="group">Camera</th></tr>
            <tr class="disabled"><td></td><th><label for="lens">Lens Length</label></th><td><input type="text" id="lens" value="50.0" disabled></td></tr>
            <tr><td></td><th><label for="rotation">Rotation</label></th><td><input type="text" id="rotation" value="0.0"></td></tr>
            <tr><td></td><th><label for="xloc">X Location</label></th><td><input type="text" id="xloc" value="48.533"></td></tr>
            <tr><td></td><th><label for="yloc">Y Location</label></th><td><input type="text" id="yloc" value="-82.245"></td></tr>
            <tr><td></td><th><label for="zloc">Z Location</label></th><td><input type="text" id="zloc" value="7.716"></td></tr>
            <tr><td></td><th><label for="placecam">Location</label></th><td><button class="place" id="placecam">Place...</button></td></tr>
            <tr><th colspan="3" class="group">Target</th></tr>
            <tr><td></td><th><label for="xtar">X Target</label></th><td><input type="text" id="xtar" value="48.533"></td></tr>
            <tr><td></td><th><label for="ytar">Y Target</label></th><td><input type="text" id="ytar" value="51.685"></td></tr>
            <tr><td></td><th><label for="ztar">Z Target</label></th><td><input type="text" id="ztar" value="7.716"></td></tr>
            <tr><td></td><th><label for="placetar">Location</label></th><td><button class="place" id="placetar">Place...</button></td></tr>
            <tr><th colspan="3" class="group">Wallpaper</th></tr>
            <tr><td></td><th><label for="file">Filename</label></th><td><div class="file"><input type="text" id="file" value="(none)"><button aria-label="Browse">...</button></div></td></tr>
            <tr><td></td><th><label for="show">Show</label></th><td><input type="checkbox" id="show" checked></td></tr>
            <tr><td></td><th><label for="gray">Gray</label></th><td><input type="checkbox" id="gray" checked></td></tr>
          </table>
        </div>
      </aside>
    </main>

    <section class="osnaps">
      <div class="grip"></div>
      <label><input type="checkbox" checked>End</label>
      <label><input type="checkbox">Near</label>
      <label><input type="checkbox" checked>Point</label>
      <label><input type="checkbox" checked>Mid</label>
      <label><input type="checkbox">Cen</label>
      <label><input type="checkbox">Int</label>
      <label><input type="checkbox" checked>Perp</label>
      <label><input type="checkbox" checked>Tan</label>
      <label><input type="checkbox">Quad</label>
      <label><input type="checkbox">Knot</label>
      <label><input type="checkbox">Vertex</label>
      <label><input type="checkbox" disabled>Project</label>
      <label><input type="checkbox" disabled>Disable</label>
    </section>

    <footer class="statusbar">
      <button class="w-plane">CPlane</button>
      <span class="w-coord">x 121.07</span>
      <span class="w-coord">y -8.43</span>
      <span class="w-coord">z 0.00</span>
      <span class="w-coord">Millimeters</span>
      <button class="w-layer"><i class="swatch"></i>Default</button>
      <button class="w-grid on">Grid Snap</button>
      <button class="w-short">Ortho</button>
      <button class="w-mid">Planar</button>
      <button class="w-mid on">Osnap</button>
      <button class="w-track on">SmartTrack</button>
      <button class="w-gumball">Gumball</button>
      <button class="w-history">Record History</button>
      <button class="w-short">Filter</button>
      <span class="w-info">Minutes from last save: 203</span>
    </footer>

    <script src="viewports.js"></script>
  </body>
</html>
```
FILE: styles.css
```
* {
  box-sizing: border-box;
}

body {
  margin: 0;
  height: 100vh;
  display: flex;
  flex-direction: column;
  overflow: hidden;
  background: #e0e3ea;
  color: #000;
  font-family: "Liberation Sans", Arial, sans-serif;
  font-size: 13px;
}

button,
input,
select {
  font: inherit;
  color: inherit;
  margin: 0;
}

button {
  border: 0;
  padding: 0;
  background: none;
  white-space: nowrap;
}

.defs {
  position: absolute;
  width: 0;
  height: 0;
}

/* title bar */
.titlebar {
  display: flex;
  align-items: center;
  height: 29px;
  flex: none;
  background: #fcfcfc;
  border-bottom: 1px solid #d8d8d8;
}

.app-icon {
  width: 20px;
  height: 20px;
  margin-left: 2px;
}

.window-title {
  flex: 1;
  margin: 0;
  padding: 2px 0 0 106px;
  text-align: center;
  font: 18px/26px "Open Sans", sans-serif;
  color: #222;
}

.window-buttons {
  display: flex;
  align-self: flex-start;
  padding-right: 3px;
}

.win-btn {
  width: 34px;
  height: 25px;
}

.win-btn svg {
  width: 16px;
  height: 20px;
}

.win-btn.close {
  width: 58px;
  background: #c75050;
}

.win-btn.close svg {
  width: 12px;
  height: 12px;
}

/* menu */
.menubar {
  display: flex;
  height: 24px;
  flex: none;
  padding-left: 1px;
  background: #f5f6f7;
  border-bottom: 1px solid #e6e8ec;
}

.menubar button {
  padding: 2px 7px 0;
  font: 14px/21px "Open Sans", sans-serif;
}

.menubar button:nth-child(n + 7) {
  padding-right: 8px;
}

/* command line */
.grip {
  flex: none;
  width: 4px;
  margin: 1px 0 0 3px;
  border: solid #b9c1d0;
  border-width: 0 1px;
}

.grip-h {
  height: 3px;
  border: solid #b9c1d0;
  border-width: 1px 0;
}

.command {
  display: flex;
  flex: none;
  height: 64px;
  padding: 4px 0 3px;
  border-bottom: 1px solid #bcc4d2;
}

.command-box {
  flex: 1;
  height: 56px;
  background: #fff;
}

.history {
  display: flex;
  height: 35px;
  border-bottom: 1px solid #a3a9b4;
}

.history-text {
  flex: 1;
  padding-left: 1px;
}

.history p {
  margin: 0;
  line-height: 17px;
  font-size: 15px;
}

.scroller {
  display: flex;
  flex-direction: column;
  width: 20px;
  background: #f0f0f0;
}

.scroller button {
  flex: 1;
}

.scroller svg {
  width: 8px;
  height: 8px;
}

.prompt {
  display: flex;
  height: 21px;
  line-height: 18px;
  padding-left: 1px;
  font-size: 14px;
  font-weight: bold;
}

.prompt input {
  flex: 1;
  border: 0;
  outline: 0;
}

.spinner {
  display: flex;
  flex-direction: column;
  width: 20px;
  padding: 1px 2px;
}

.spinner button {
  flex: 1;
  display: grid;
  place-items: center;
  border: 1px solid #b0b0b0;
  background: #f0f0f0;
}

.spinner svg {
  width: 8px;
  height: 6px;
}

/* toolbar tabs */
.toolbars {
  display: flex;
  flex: none;
  padding-top: 4px;
}

.toolbars .grip {
  margin-bottom: 6px;
}

.toolbars-body {
  flex: 1;
}

.tabs {
  display: flex;
  height: 20px;
  border-bottom: 1px solid #a3abbb;
}

.tab {
  position: relative;
  z-index: 0;
  height: 20px;
  padding: 0 15px 0 13px;
}

.tab:nth-child(n + 6) {
  padding: 0 17px 0 15px;
}

.tab:first-child {
  padding-right: 16px;
  padding-left: 15px;
}

.tab::before,
.tab::after {
  content: "";
  position: absolute;
  z-index: -1;
  top: 0;
  bottom: 1px;
  background: #d5daea;
  border: solid #a9b1c2;
}

.tab::before {
  left: -3px;
  width: 16px;
  border-width: 1px 0 0 1px;
  transform: skewX(-39deg);
}

.tab::after {
  left: 8px;
  right: 0;
  border-width: 1px 1px 0 0;
  border-radius: 0 4px 0 0;
}

.tab.active {
  z-index: 1;
}

.tab.active::before,
.tab.active::after {
  background: #fafafc;
  bottom: 0;
}

.tab.active::before {
  left: 3px;
  transform: skewX(-20deg);
}

.options {
  margin-left: auto;
  width: 20px;
}

.options svg {
  width: 16px;
  height: 16px;
}

.toolbar {
  display: flex;
  height: 38px;
  background: linear-gradient(#f4f4f7, #dfe2e9);
}

.tool {
  position: relative;
  display: grid;
  place-items: center;
  width: 28px;
  height: 28px;
}

.toolbar .tool {
  height: 30px;
}

.tool svg {
  width: 22px;
  height: 22px;
  fill: none;
  stroke: #222;
}

.tool.more::after {
  content: "";
  position: absolute;
  right: 1px;
  bottom: 1px;
  border: solid transparent;
  border-width: 6px 0 0 6px;
  border-top: 0;
  border-bottom: 6px solid #6a6a6a;
}

.tool .nodes {
  stroke: none;
}

.nodes {
  marker: url(#sq);
}

.dots,
.nodes.round {
  marker: url(#dot);
}

.checker {
  background: repeating-conic-gradient(#ccc 0 25%, #eee 0 50%) 50% / 4px 4px content-box;
  padding: 3px;
}

.wheel {
  width: 20px;
  height: 20px;
  border-radius: 50%;
  border: 1px solid #555;
  background:
    radial-gradient(circle, #f4f4f7 0 5px, transparent 6px),
    conic-gradient(#f03020, #d020c0, #3030f0, #10b0f0, #10c030, #f0e810, #f03020);
}

.wheel.small {
  width: 16px;
  height: 16px;
  background:
    radial-gradient(circle, #f4f4f7 0 4px, transparent 5px),
    conic-gradient(#f03020, #d020c0, #3030f0, #10b0f0, #10c030, #f0e810, #f03020);
}

.help {
  width: 20px;
  height: 20px;
  border-radius: 50%;
  border: 1px solid #2038a0;
  background: linear-gradient(#6c8cf0, #2848c0);
  color: #fff;
  font: bold 17px/18px "Liberation Serif", serif;
}

/* workspace */
.workspace {
  display: flex;
  flex: 1;
  min-height: 0;
}

.sidebar {
  width: 64px;
  flex: none;
  padding-top: 3px;
}

.sidebar .grip-h {
  margin: 0 6px 2px 3px;
}

.tools {
  display: grid;
  grid-template-columns: 28px 28px;
  padding-left: 1px;
}

.center {
  flex: 1;
  min-width: 0;
  display: flex;
  flex-direction: column;
  border-left: 1px solid #9da9be;
}

.viewports {
  flex: 1;
  min-height: 0;
  display: grid;
  grid-template-columns: 770fr 767fr;
  grid-template-rows: 405fr 406fr;
  gap: 3px;
  border-top: 1px solid #9da9be;
}

.viewport {
  position: relative;
  overflow: hidden;
  background: #9da3aa;
}

.viewport.dark {
  background: #000;
}

.viewport > svg {
  display: block;
  position: absolute;
  width: 100%;
  height: 100%;
}

.view-label {
  position: absolute;
  left: 0;
  top: 0;
  display: flex;
  height: 23px;
  padding-left: 9px;
  background: #ccd0d8;
  border-radius: 0 0 3px 0;
  color: #555;
  font: 14px/23px "Open Sans", sans-serif;
}

.view-label i {
  width: 11px;
  margin: 2px 0 2px 9px;
  border-left: 1px solid #333;
}

.view-label i::before {
  content: "";
  display: block;
  margin: 7px 0 0 1px;
  width: 0;
  border: 4px solid transparent;
  border-top-color: #222;
}

.view-label.current {
  background: #8ba4c2;
  color: #111;
}

.axes path {
  fill: none;
  stroke: #6a7078;
}

.axes text {
  fill: #6a7078;
  font: bold 12px "Open Sans", sans-serif;
}

.pts {
  stroke-width: 6px;
  stroke-linecap: square;
}

/* viewport tabs */
.view-tabs {
  display: flex;
  height: 34px;
  padding-top: 1px;
  overflow: hidden;
}

.view-tabs button {
  position: relative;
  height: 30px;
  padding: 0 12px 0 16px;
  font: 18px/30px "Open Sans", sans-serif;
}

.view-tabs button::before,
.view-tabs button::after {
  content: "";
  position: absolute;
  z-index: -1;
  top: 0;
  bottom: 0;
  background: #d5daea;
  border: solid #a9b1c2;
}

.view-tabs button::before {
  left: 0;
  width: 24px;
  border-width: 0 0 1px 1px;
  transform: skewX(41deg);
}

.view-tabs button::after {
  left: 16px;
  right: 0;
  border-width: 0 1px 1px 0;
  border-radius: 0 0 4px 0;
}

.view-tabs button:nth-child(1) { z-index: 5; }
.view-tabs button:nth-child(2) { z-index: 4; }
.view-tabs button:nth-child(4) { z-index: 2; }
.view-tabs button:nth-child(5) { z-index: 1; }

.view-tabs button.active {
  z-index: 6;
}

.view-tabs .active::before,
.view-tabs .active::after {
  background: #fff;
}

.view-tabs .add::before,
.view-tabs .add::after {
  background: #e0e3ea;
}

.add svg {
  width: 10px;
  height: 10px;
  margin: 0 6px;
}

/* properties panel */
.panel {
  display: flex;
  flex-direction: column;
  flex: none;
  width: 306px;
  margin: 3px 0 5px 9px;
}

.panel-tabs {
  display: flex;
  flex: none;
  height: 22px;
  margin-top: 2px;
  align-items: stretch;
}

.panel-tabs button:not(.options) {
  position: relative;
  display: flex;
  align-items: center;
  gap: 3px;
  padding: 0 14px 0 4px;
}

.panel-tabs button:not(.options) svg {
  width: 16px;
  height: 16px;
}

.panel-tabs button:not(.options)::before,
.panel-tabs button:not(.options)::after {
  content: "";
  position: absolute;
  z-index: -1;
  top: 0;
  bottom: 0;
  background: #d5daea;
  border: solid #a9b1c2;
}

.panel-tabs button:not(.options)::before {
  left: 0;
  right: 20px;
  border-width: 1px 0 1px 1px;
  border-radius: 4px 0 0 0;
}

.panel-tabs button:not(.options)::after {
  right: 0;
  width: 22px;
  border-width: 1px 1px 1px 0;
  transform: skewX(41deg);
}

/* the last tab covers the slant of the one before it */
.panel-tabs button:nth-child(1) { z-index: 3; }
.panel-tabs button:nth-child(2) { z-index: 1; margin-left: -2px; }
.panel-tabs button:nth-child(3) { z-index: 2; }

.panel-tabs button.active::before,
.panel-tabs button.active::after {
  background: #f7f7fa;
  border-bottom-color: #f7f7fa;
}

.panel-body {
  flex: 1;
  padding: 6px 7px 0 2px;
  background: #f7f7fa;
  border: 1px solid #a3abbb;
  border-top-color: #c4cad6;
}

.props {
  width: 100%;
  table-layout: fixed;
  border-collapse: collapse;
  border: 1px solid #e0e3ea;
}

.props .indent {
  width: 9px;
}

.props .names {
  width: 138px;
}

.props tr {
  height: 22px;
}

.props th,
.props td {
  padding: 0;
  height: 22px;
  border-bottom: 1px solid #e0e3ea;
  text-align: left;
  font-weight: normal;
}

.props th:not(.group) {
  padding-left: 4px;
  background: #fff;
}

.props th + td {
  background: #fff;
  border-left: 1px solid #e0e3ea;
}

.props .group {
  height: 27px;
  padding-left: 3px;
}

.props .group.first {
  height: 26px;
}

.props .disabled {
  color: #777;
}

.props .disabled th + td {
  background: #e0e3ea;
}

.props input[type="text"],
.props select {
  display: block;
  width: 100%;
  height: 21px;
  border: 0;
  padding: 0 4px;
  background: none;
}

.props select {
  appearance: none;
  height: 20px;
  background:
    linear-gradient(45deg, transparent 35%, #444 35% 60%, transparent 60%) right 10px top 7px / 5px 6px no-repeat,
    linear-gradient(-45deg, transparent 35%, #444 35% 60%, transparent 60%) right 6px top 7px / 5px 6px no-repeat,
    linear-gradient(#acacac, #acacac) right 20px top 0 / 1px 100% no-repeat,
    linear-gradient(#eee, #eee) right 0 top 0 / 20px 100% no-repeat;
}

.props .place {
  display: block;
  width: calc(100% - 2px);
  height: 20px;
  margin-left: 1px;
}

.props .place,
.file button {
  border: 1px solid #acacac;
  background: linear-gradient(#f2f2f2, #e2e2e2);
}

.file {
  display: flex;
}

.file input[type="text"] {
  flex: 1;
  min-width: 0;
  padding-left: 2px;
}

.file button {
  width: 20px;
  height: 20px;
}

/* check boxes */
input[type="checkbox"] {
  appearance: none;
  display: block;
  width: 20px;
  height: 20px;
  border: 1px solid #555;
  background: #fff;
}

input[type="checkbox"]:checked::before {
  content: "";
  display: block;
  width: 7px;
  height: 11px;
  margin: 2px 0 0 6px;
  border: solid #111;
  border-width: 0 3px 3px 0;
  transform: rotate(38deg);
}

input[type="checkbox"]:disabled {
  border-color: #b0b0b0;
  background: #e4e4e4;
}

.props input[type="checkbox"] {
  width: 15px;
  height: 15px;
  margin-left: 5px;
}

.props input[type="checkbox"]:checked::before {
  width: 5px;
  height: 9px;
  margin: 0 0 0 4px;
  border-width: 0 2px 2px 0;
}

/* object snaps */
.osnaps {
  display: flex;
  align-items: center;
  flex: none;
  height: 30px;
  font: 13px/20px "Open Sans", sans-serif;
}

.osnaps .grip {
  height: 24px;
  margin-right: 2px;
}

.osnaps label {
  display: flex;
  gap: 4px;
  margin-right: 5px;
}

.osnaps label:nth-of-type(n + 7) {
  margin-right: 4px;
}

/* status bar */
.statusbar {
  display: flex;
  flex: none;
  height: 22px;
  border-top: 1px solid #9da9be;
  border-bottom: 1px solid #b8bcc4;
  font: 14px/20px "Open Sans", sans-serif;
}

.statusbar > * {
  flex: none;
  border-right: 1px solid #9da9be;
  text-align: center;
  white-space: nowrap;
}

.statusbar .on {
  background: #e2f1fb;
  font-weight: bold;
}

.w-plane { width: 68px; }
.w-coord { width: 88px; }
.w-grid { width: 92px; }
.w-short { width: 56px; }
.w-mid { width: 64px; }
.w-track { width: 106px; }
.w-gumball { width: 78px; }
.w-history { width: 130px; }

.statusbar .w-layer {
  display: flex;
  align-items: center;
  gap: 2px;
  width: 173px;
  padding-left: 3px;
}

.swatch {
  width: 16px;
  height: 16px;
  background: #000;
}

.statusbar .w-info {
  border: 0;
}
```
FILE: viewports.js
```
// Ground plane: twenty major cells on each side of the origin
function project(u, v) {
  const w = 1 + 0.0001 * u + 0.0004 * v;
  const x = 257.7 + (23.65 * u + 12.39 * v) / w;
  const y = 209 + (-5.86 * u + 11.52 * v) / w;
  return x.toFixed(1) + " " + y.toFixed(1);
}

function gridPath(step) {
  let d = "";
  for (let i = -20; i <= 20.01; i += step) {
    d += `M${project(i, -20)}L${project(i, 20)}`;
    d += `M${project(-20, i)}L${project(20, i)}`;
  }
  return d;
}

function setPath(id, d) {
  document.getElementById(id).setAttribute("d", d);
}

setPath("gridPlane", `M${project(-20, -20)}L${project(20, -20)}L${project(20, 20)}L${project(-20, 20)}z`);
setPath("gridMinor", gridPath(0.2));
setPath("gridMajor", gridPath(1));

// Smooth curve through a list of points
function spline(pts, start = "M") {
  let d = `${start}${pts[0][0]} ${pts[0][1]}`;
  for (let i = 0; i < pts.length - 1; i++) {
    const a = pts[i - 1] || pts[i];
    const b = pts[i];
    const c = pts[i + 1];
    const e = pts[i + 2] || c;
    d += `C${b[0] + (c[0] - a[0]) / 6} ${b[1] + (c[1] - a[1]) / 6}`;
    d += ` ${c[0] - (e[0] - b[0]) / 6} ${c[1] - (e[1] - b[1]) / 6} ${c[0]} ${c[1]}`;
  }
  return d;
}

const back = [[117,233],[230,211],[298,195],[360,182],[424,167],[487,151],[550,137],[614,127],[678,117],[740,101],[848,72]];
const right = [[848,72],[902,138],[932,176],[966,211],[995,243],[1030,270],[1062,293],[1096,318],[1126,340],[1160,357],[1222,397]];
const front = [[1222,397],[1106,454],[1042,488],[980,513],[918,530],[853,545],[790,557],[727,563],[665,570],[600,591],[490,636]];
const left = [[490,636],[437,577],[405,542],[376,514],[345,481],[308,451],[275,418],[245,382],[213,346],[177,305],[117,233]];

const edge = spline(back) + spline(right, "L") + spline(front, "L") + spline(left, "L") + "z";
setPath("terrainEdge", edge);
setPath("terrainShape", edge);

const wires = [
  [[177,305],[285,285],[410,262],[505,240],[580,217],[665,187],[735,165],[800,152],[902,138]],
  [[213,346],[320,322],[430,308],[520,295],[600,270],[690,230],[760,200],[830,188],[932,176]],
  [[245,382],[340,357],[440,335],[560,330],[620,315],[700,282],[780,250],[860,228],[966,211]],
  [[275,418],[370,390],[450,374],[560,373],[640,360],[720,330],[800,300],[880,275],[995,243]],
  [[308,451],[400,430],[470,415],[600,411],[680,392],[760,355],[850,333],[930,307],[1030,270]],
  [[345,481],[450,468],[520,453],[620,443],[700,420],[790,390],[880,368],[960,345],[1062,293]],
  [[376,514],[470,488],[540,475],[640,473],[720,455],[800,420],[900,395],[980,372],[1096,318]],
  [[405,542],[490,505],[560,487],[640,497],[720,490],[800,455],[880,430],[980,400],[1126,340]],
  [[437,577],[530,540],[600,517],[680,520],[750,525],[820,495],[900,465],[1000,430],[1160,357]],
  [[230,211],[268,270],[310,335],[370,400],[430,450],[490,500],[550,545],[600,591]],
  [[298,195],[345,260],[385,325],[430,385],[490,440],[550,475],[600,515],[665,570]],
  [[360,182],[405,255],[450,340],[500,395],[560,440],[640,485],[690,525],[727,563]],
  [[424,167],[470,240],[520,310],[570,380],[630,435],[700,485],[750,530],[790,557]],
  [[487,151],[540,235],[600,320],[650,385],[710,440],[780,500],[853,545]],
  [[550,137],[600,205],[650,270],[700,345],[770,410],[840,470],[918,530]],
  [[614,127],[680,205],[740,270],[790,350],[840,400],[910,460],[980,513]],
  [[678,117],[750,190],[800,250],[850,320],[910,375],[980,435],[1042,488]],
  [[740,101],[820,180],[870,240],[920,310],[990,365],[1050,410],[1106,454]]
];
setPath("terrainWires", wires.map((w) => spline(w)).join(""));

const points = [
  [267,279],[372,260],[480,240],[585,207],[693,173],[798,147],[852,206],[747,234],[639,287],
  [534,312],[426,325],[321,345],[909,279],[801,312],[693,345],[588,377],[480,377],[375,396],
  [963,338],[855,378],[750,399],[642,438],[534,450],[430,462],[1017,375],[909,416],[804,443],
  [696,483],[591,489],[483,501],[1071,413],[963,461],[858,486],[750,526],[645,519],[537,546]
];
setPath("terrainPoints", points.map((p) => `M${p[0] - 3} ${p[1]}h6`).join(""));
```
